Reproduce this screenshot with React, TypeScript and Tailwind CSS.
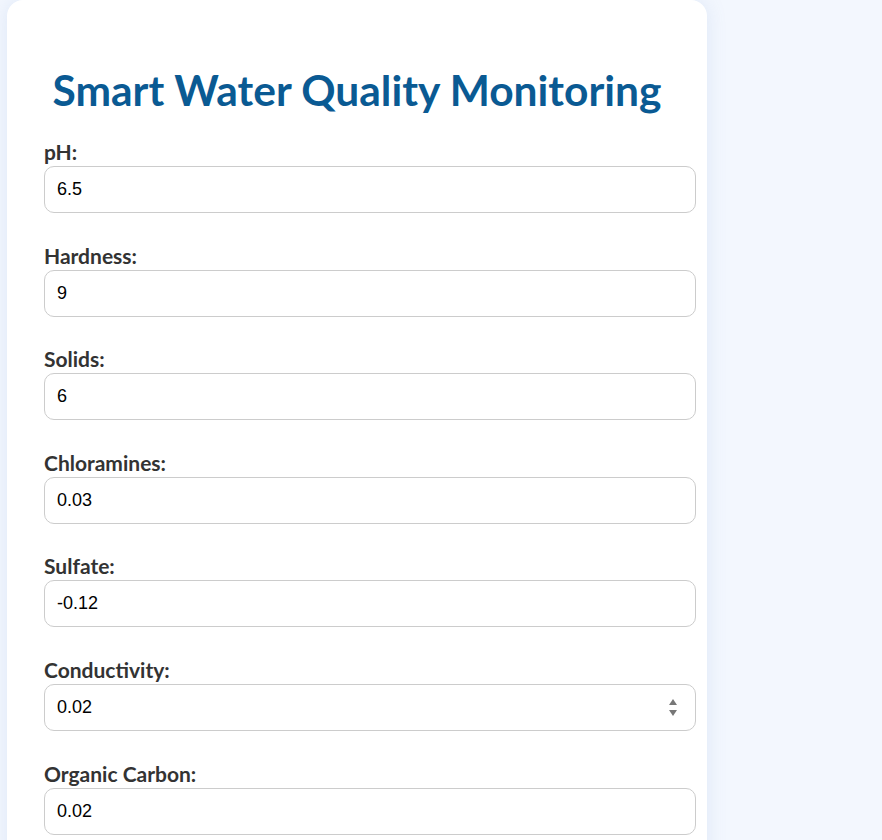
import React from "react";

const fields = [
  { label: "pH:", value: "6.5" },
  { label: "Hardness:", value: "9" },
  { label: "Solids:", value: "6" },
  { label: "Chloramines:", value: "0.03" },
  { label: "Sulfate:", value: "-0.12" },
  { label: "Conductivity:", value: "0.02", spin: true },
  { label: "Organic Carbon:", value: "0.02" },
];

export default function App() {
  return (
    <div className="min-h-[840px] bg-[#f3f7fe] overflow-hidden">
      <div className="ml-[7px] w-[700px] bg-white rounded-t-[16px] shadow-[0_0_20px_rgba(100,140,200,0.15)] pt-[66px] pl-[37px] pb-10">
        <h1 className="w-[626px] whitespace-nowrap text-center text-[42.5px] leading-[48px] font-bold text-[#0a5a93] font-['Lato',sans-serif] mb-[27px]">
          Smart Water Quality Monitoring
        </h1>
        <form className="flex flex-col">
          {fields.map((f) => (
            <div key={f.label} className="mb-[31.6px] last:mb-0">
              <label className="block text-[21px] leading-[22px] font-bold text-[#333] font-['Lato',sans-serif] mb-[3px]">
                {f.label}
              </label>
              <div className="relative w-[652px]">
                <input
                  type="text"
                  defaultValue={f.value}
                  className="w-full h-[47px] px-[12px] border border-[#ccc] rounded-[10px] text-[18px] text-black font-['Liberation_Sans',Arial,sans-serif] outline-none"
                />
                {f.spin && (
                  <svg
                    className="absolute right-[18px] top-[14px]"
                    width="10"
                    height="19"
                    viewBox="0 0 10 19"
                  >
                    <path d="M5 1 L9 7 L1 7 Z" fill="#777" />
                    <path d="M1 12 L9 12 L5 18 Z" fill="#777" />
                  </svg>
                )}
              </div>
            </div>
          ))}
        </form>
      </div>
    </div>
  );
}
